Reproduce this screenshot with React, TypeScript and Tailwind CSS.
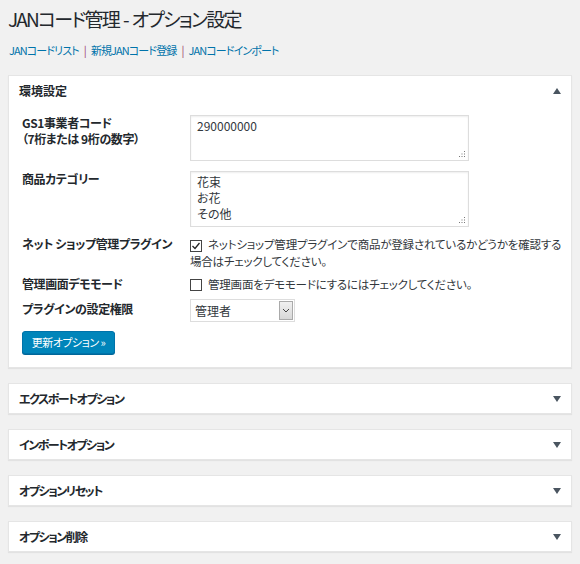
const font = { fontFamily: '"Noto Sans CJK JP", "Noto Sans", sans-serif' };

function Panel({ title, open, children }: { title: string; open?: boolean; children?: React.ReactNode }) {
  return (
    <div className="border border-[#e5e5e5] bg-white shadow-[0_1px_1px_rgba(0,0,0,0.06)]">
      <div className="flex h-[29px] items-center justify-between pl-[10px] pr-[10px]">
        <span className={`text-[12px] font-bold text-[#23282d] ${open ? '' : 'tracking-[-1.5px]'}`}>{title}</span>
        <svg width="8" height="6" viewBox="0 0 8 6" className="mt-[1px]">
          {open ? <path d="M4 0 L8 6 L0 6 Z" fill="#4a5560" /> : <path d="M0 0 L8 0 L4 6 Z" fill="#4a5560" />}
        </svg>
      </div>
      {children}
    </div>
  );
}

function Check({ checked }: { checked?: boolean }) {
  return (
    <span className="mr-[6px] inline-flex h-[12px] w-[12px] translate-y-[1px] items-center justify-center border border-[#444] bg-white align-[-1px]">
      {checked && (
        <svg width="10" height="10" viewBox="0 0 10 10">
          <path d="M1.5 5 L4 7.5 L8.5 2" stroke="#222" strokeWidth="1.3" fill="none" />
        </svg>
      )}
    </span>
  );
}

function Grip() {
  return (
    <svg width="7" height="7" viewBox="0 0 7 7" className="absolute bottom-[3px] right-[3px]">
      <rect x="5" y="0" width="1" height="1" fill="#777" />
      <rect x="2.5" y="2.5" width="1" height="1" fill="#777" />
      <rect x="5" y="2.5" width="1" height="1" fill="#777" />
      <rect x="0" y="5" width="1" height="1" fill="#777" />
      <rect x="2.5" y="5" width="1" height="1" fill="#777" />
      <rect x="5" y="5" width="1" height="1" fill="#777" />
    </svg>
  );
}

function Area({ value, h }: { value: string; h: string }) {
  return (
    <div className="relative w-[279px]">
      <textarea
        defaultValue={value}
        className={`${h} block w-full resize-none border border-[#ddd] px-[6px] py-[2px] text-[12px] leading-[16px] text-[#32373c] shadow-[inset_0_1px_2px_rgba(0,0,0,0.07)] outline-none`}
      />
      <Grip />
    </div>
  );
}

function Row({ label, children }: { label: React.ReactNode; children: React.ReactNode }) {
  return (
    <div className="flex">
      <div className="w-[168px] shrink-0 text-[12px] font-bold leading-[16px] tracking-[-0.4px] text-[#23282d]">{label}</div>
      <div className="flex-1">{children}</div>
    </div>
  );
}

export default function App() {
  return (
    <div className="min-h-[564px] bg-[#f1f1f1] px-[8px] text-[#32373c] [font-feature-settings:'palt']" style={font}>
      <h1 className="pt-[6px] text-[19px] leading-[26px] tracking-[-1.8px] text-[#23282d]">
        JANコード管理<span className="px-[4px]">-</span>オプション設定
      </h1>
      <div className="mt-[10px] flex gap-[5px] pl-[1px] text-[11px] leading-[16px] tracking-[-0.9px]">
        <a className="text-[#0073aa]">JANコードリスト</a>
        <span className="text-[#9b3a6a]">|</span>
        <a className="text-[#0073aa]">新規JANコード登録</a>
        <span className="text-[#9b3a6a]">|</span>
        <a className="text-[#0073aa]">JANコードインポート</a>
      </div>

      <div className="mt-[17px] flex flex-col gap-[15px]">
        <Panel title="環境設定" open>
          <div className="flex flex-col pb-[13px] pl-[13px] pr-[12px] pt-[10px]">
            <Row label={<><div>GS1事業者コード</div><div>（7桁または 9桁の数字）</div></>}>
              <Area value="290000000" h="h-[46px]" />
            </Row>
            <div className="mt-[10px]">
              <Row label="商品カテゴリー">
                <Area value={"花束\nお花\nその他"} h="h-[56px]" />
              </Row>
            </div>
            <div className="mt-[9px]">
              <Row label="ネット ショップ管理プラグイン">
                <div className="text-[11.5px] leading-[17px] tracking-[-0.2px]">
                  <span className="whitespace-nowrap">
                    <Check checked />
                    ネットショップ管理プラグインで商品が登録されているかどうかを確認する
                  </span>
                  <br />
                  場合はチェックしてください。
                </div>
              </Row>
            </div>
            <div className="mt-[6px]">
              <Row label="管理画面デモモード">
                <div className="text-[11.5px] leading-[17px] tracking-[-0.2px]">
                  <Check />
                  管理画面をデモモードにするにはチェックしてください。
                </div>
              </Row>
            </div>
            <div className="mt-[6px]">
              <Row label={<div className="pt-[2px]">プラグインの設定権限</div>}>
                <div className="flex h-[23px] w-[105px] items-center border border-[#ddd] bg-white">
                  <span className="flex-1 pl-[4px] text-[12px]">管理者</span>
                  <span className="mr-[1px] flex h-[19px] w-[14px] items-center justify-center border border-[#aaa] bg-gradient-to-b from-[#f0f0f0] to-[#d8d8d8]">
                    <svg width="8" height="5" viewBox="0 0 8 5">
                      <path d="M1 1 L4 4 L7 1" stroke="#444" strokeWidth="1" fill="none" />
                    </svg>
                  </span>
                </div>
              </Row>
            </div>
            <button className="mt-[9px] h-[23px] w-[93px] rounded-[3px] border border-[#0073aa] bg-[#0085ba] text-[11px] tracking-[-0.5px] text-white shadow-[0_1px_0_#006799]">
              更新オプション »
            </button>
          </div>
        </Panel>
        <Panel title="エクスポートオプション" />
        <Panel title="インポートオプション" />
        <Panel title="オプションリセット" />
        <Panel title="オプション削除" />
      </div>
    </div>
  );
}
